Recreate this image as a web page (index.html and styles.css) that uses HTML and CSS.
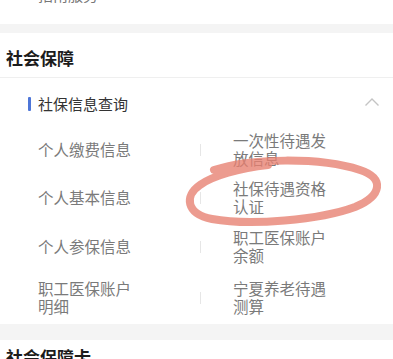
FILE: index.html
```html
<!DOCTYPE html>
<html lang="zh">
<head>
<meta charset="utf-8">
<link rel="stylesheet" href="styles.css">
</head>
<body>
<div class="page">
  <div class="top-block"><span class="top-text">指南服务</span></div>
  <div class="band band-1"></div>
  <section class="section">
    <h2 class="title">社会保障</h2>
    <div class="subhead">
      <span class="bar"></span>
      <span class="subhead-text">社保信息查询</span>
      <svg class="chevron" width="16" height="10" viewBox="0 0 16 10"><path d="M1.5 8.5 L8 2 L14.5 8.5" fill="none" stroke="#c4c4c4" stroke-width="1.4"/></svg>
    </div>
    <div class="grid">
      <div class="cell left r1"><span class="txt">个人缴费信息</span></div>
      <div class="cell right r1"><span class="txt">一次性待遇发放信息</span></div>
      <div class="cell left r2"><span class="txt">个人基本信息</span></div>
      <div class="cell right r2"><span class="txt">社保待遇资格认证</span></div>
      <div class="cell left r3"><span class="txt">个人参保信息</span></div>
      <div class="cell right r3"><span class="txt">职工医保账户余额</span></div>
      <div class="cell left r4"><span class="txt">职工医保账户明细</span></div>
      <div class="cell right r4"><span class="txt">宁夏养老待遇测算</span></div>
    </div>
  </section>
  <div class="band band-2"></div>
  <section class="section">
    <h2 class="title title-2">社会保障卡</h2>
  </section>
  <svg class="mark" width="393" height="359" viewBox="0 0 393 359">
    <path d="M214 170 C 250 158, 320 157, 360 170 C 385 178, 382 196, 355 207 C 320 220, 250 226, 212 219 C 186 214, 184 196, 200 185 C 212 176, 240 168, 268 165"
      fill="none" stroke="#e77f70" stroke-opacity="0.78" stroke-width="8" stroke-linecap="round"/>
  </svg>
</div>
</body>
</html>
```
FILE: styles.css
```css
* { box-sizing: border-box; }
html, body { margin: 0; padding: 0; background: #fff; }
body {
  font-family: "Noto Sans CJK SC", "Noto Sans", sans-serif;
  width: 393px;
  height: 359px;
  overflow: hidden;
}
.page { position: relative; width: 393px; height: 359px; overflow: hidden; }
.top-block { display: flow-root; height: 24px; padding-left: 38px; }
.top-text {
  display: block;
  margin-top: -15px;
  font-size: 15px;
  line-height: 20px;
  color: #777;
}
.band { background: #f4f4f4; }
.band-1 { height: 9px; }
.band-2 { height: 16px; }
.section { background: #fff; }
.title {
  margin: 0;
  font-size: 17px;
  line-height: 22px;
  font-weight: 700;
  color: #1c1c1c;
  padding: 14px 0 8px 6px;
  border-bottom: 1px solid #efefef;
}
.title-2 { padding-top: 6px; border-bottom: none; }
.subhead {
  display: flex;
  align-items: center;
  height: 46px;
  padding: 6px 12px 0 28px;
}
.bar {
  width: 3px;
  height: 14px;
  background: #4e76d8;
  border-radius: 1px;
  margin-right: 7px;
}
.subhead-text {
  font-size: 15px;
  line-height: 22px;
  color: #333;
  flex: 1;
}
.chevron { display: block; margin-right: 1px; margin-top: -4px; }
.grid {
  display: grid;
  grid-template-columns: 200px 193px;
  grid-template-rows: 49px 48px 49px 54px;
}
.cell {
  display: flex;
  align-items: center;
  position: relative;
}
.left { padding-left: 38px; }
.right { padding-left: 33px; }
.right::before {
  content: "";
  position: absolute;
  left: 0;
  top: 50%;
  width: 1px;
  height: 12px;
  margin-top: -5px;
  background: #e6e6e6;
}
.txt {
  display: block;
  width: 98px;
  font-size: 15.5px;
  line-height: 18px;
  color: #7a7a7a;
}
.mark { position: absolute; left: 0; top: 0; pointer-events: none; }
```
